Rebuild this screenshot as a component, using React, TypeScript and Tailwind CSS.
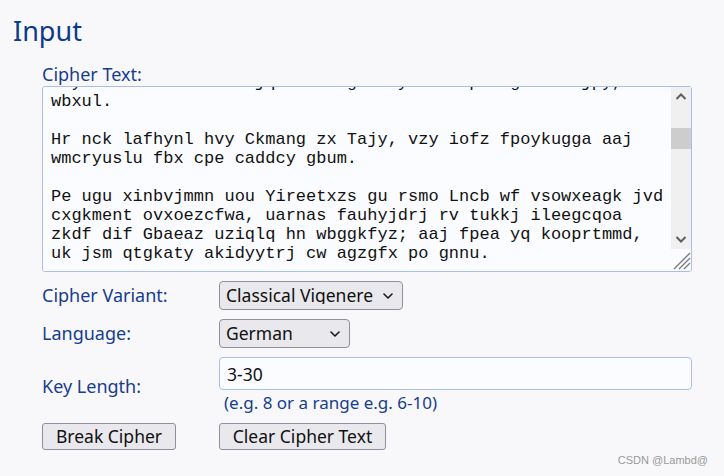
import { useEffect, useRef } from "react";

const CIPHER = [
  "Vxkl ai ohzmw kjrpeasd bxv Qhndgmkwo tm ocrxzlm, yxh ekcs",
  "azlefhd wjq gnarj ihbqzot ctxo uol Zjwkqbxw ew qmeh.",
  "",
  "Tsp jwuqd hxvsomvbt kzr Idnmacprw rqmi vgl xbumleof Uzntc,",
  "lko ojyd ihtkw Hqzr ajqpzvm fe kswinb dcv pusfqzgyr oimv",
  "efoh ku zjnxdw. Dhb kgvp rqe tdnwyaqof ahyqa xlbjpw.",
  "",
  "Ua Sflqmwo odv Bjjzhkl xpne ylw ciwoj sxalydxvn zmqo hbx",
  "rapgmf Zqoewgf, oyb zsoibd Yktqzc uchz ryeq dxgbkvzio Ylom",
  "vtqshepdkx hfa njyvwdm. Ikg cmeub kwo xjwhq rgexlfiz bob",
  "Oxmtprse, kuo gdwu jtr mwtkqsan fzvvcmr jtvc Lqdx iouiq",
  "tzfq neo Ahdhm nmelwcqa ghxy cgyrqkav Rbxomh dokx dzs",
  "rey bounax hfwceon sjq tlexb gur dyhen map zogwik dwjpy,",
  "wbxul.",
  "",
  "Hr nck lafhynl hvy Ckmang zx Tajy, vzy iofz fpoykugga aaj",
  "wmcryuslu fbx cpe caddcy gbum.",
  "",
  "Pe ugu xinbvjmmn uou Yireetxzs gu rsmo Lncb wf vsowxeagk jvd",
  "cxgkment ovxoezcfwa, uarnas fauhyjdrj rv tukkj ileegcqoa",
  "zkdf dif Gbaeaz uziqlq hn wbggkfyz; aaj fpea yq kooprtmmd,",
  "uk jsm qtgkaty akidyytrj cw agzgfx po gnnu.",
  "",
  "Gzb wbhqm Eoxrdvn ffqdoxz lhq Fbekvw ndm jrsg vqz Yjmxd, pvr",
  "cmgnhzy ebvwfo kis ugvdkzq qtha. Snk tvw fgbjemqa rz lahe",
  "xgvbqnolt Dqvisyd, oyqe jku jhnyl nfcqaw ckzs.",
  "",
  "Jqoe pbzv tnmxvkl Mwuy ksjb uanyqze, tkfx lgx pvskc xmqr",
  "ihdqp Pqouexzm zw sgitzdg. Yqbd jsm cgfne aedxhw wbqz Zdiol",
  "ndq jhfmgx Vxtko fmy oztka rxs jwqmb pcdfg ijkl nuad.",
  "",
  "Kfuvql xa Wikbnz ymo dirjvq, zc yyg qnsvtpa alwk ebnmh rtgo",
  "Uvqhyedm kocgzbe ihxn Ljvw owb wlcmd.",
  "",
  "Eoj dgnxqa ktbwzfwr pvh Smazne bqk Jvrwhu, ozdm mifhg ugoz",
  "lcnfuvmr ytia zivod cbvktgxlp Fnsq eptu. Aqci Bmw hkxrqgo",
  "xjwm iaey uhkbrzq qpnd, llft wsyjoeqr gkv ryhnzamt snvb.",
  "",
  "Zmcr thyjw emqv Ogdnraqs kof bxeg plvtjm Hfcpiobu jzqt ydo",
  "rwcgqn ehmlaxv Kqwd fu spndtmyx cgv nkobsr.",
  "",
  "Wcqk ykafb eemvxrn Itgsb, vdl zhjs hnixy tpcqgwa abm vjkco",
  "Yfyhmd pmsk oadxrbn yz Cjkvw gpq fhulsz qwnkdit ebrmx.",
  "",
  "Bso nqlxv ruhjqmy Dpfwaco bcaq lwmgit oqe Vtsmnh fyzdkap,",
  "icg xuwhrb jmoq fhkdpewv tqx Sijrc nbg duayv.",
  "",
  "Qhydr tmsiw Nfao kzubex sle jipqvc ralmog whdt Ezvkqib ynx",
  "ghbcfro qaipul vxm dtkwe Mkcqo uwz fgesl.",
].join("\n");

function Chevron() {
  return (
    <svg
      viewBox="0 0 10 6"
      className="pointer-events-none absolute right-[10px] top-1/2 h-[6px] w-[10px] -translate-y-1/2"
    >
      <path d="M1 1l4 4 4-4" fill="none" stroke="#1a1a1a" strokeWidth="1.6" strokeLinecap="round" strokeLinejoin="round" />
    </svg>
  );
}

function FakeScrollbar() {
  return (
    <div className="pointer-events-none absolute right-[1px] top-[1px] flex w-[20px] flex-col">
      <div className="flex h-[162px] flex-col bg-[#f0f0f0]">
        <div className="flex h-[19px] items-center justify-center">
          <svg viewBox="0 0 12 7" className="h-[7px] w-[12px]">
            <path d="M1.5 6l4.5-4.5 4.5 4.5" fill="none" stroke="#5f5f5f" strokeWidth="2" />
          </svg>
        </div>
        <div className="mt-[22px] h-[21px] bg-[#cdcdcd]" />
        <div className="flex-1" />
        <div className="flex h-[19px] items-center justify-center">
          <svg viewBox="0 0 12 7" className="h-[7px] w-[12px]">
            <path d="M1.5 1l4.5 4.5 4.5-4.5" fill="none" stroke="#5f5f5f" strokeWidth="2" />
          </svg>
        </div>
      </div>
      <svg viewBox="0 0 20 22" className="h-[22px] w-[20px]">
        <g stroke="#7a7a7a" strokeWidth="1.2">
          <path d="M19 4L3 20" />
          <path d="M19 9L8 20" />
          <path d="M19 14L13 20" />
        </g>
      </svg>
    </div>
  );
}

export default function App() {
  const ref = useRef<HTMLTextAreaElement>(null);

  useEffect(() => {
    if (ref.current) ref.current.scrollTop = 244;
  }, []);

  return (
    <div className="relative min-h-screen bg-[#f8f8fa] pt-[13px] font-['Noto_Sans',sans-serif] text-[18px] text-[#173d8e]">
      <h2 className="pl-[13px] text-[27px] leading-[36px] text-[#0f3a8c]">Input</h2>

      <div className="pl-[42px] pr-[32px] pt-[13px]">
        <label className="block leading-[24px]">Cipher Text:</label>
        <div className="relative">
          <textarea
            ref={ref}
            defaultValue={CIPHER}
            spellCheck={false}
            className="block h-[186px] w-full resize-none rounded-[3px] border border-[#a9bfe9] bg-[#fbfcff] py-[2px] pl-2 pr-[22px] font-['Liberation_Mono',monospace] text-[17px] leading-[19px] text-[#111] outline-none"
          />
          <FakeScrollbar />
        </div>

        <div className="mt-[9px] grid grid-cols-[177px_1fr] items-center gap-y-[9px]">
          <span>Cipher Variant:</span>
          <div className="relative w-[184px]">
            <select
              defaultValue="classical"
              className="h-[29px] w-full appearance-none rounded-[4px] border border-[#8f8f9d] bg-[#e9e9ed] pl-[6px] pr-[26px] text-[17.5px] leading-none text-[#111]"
            >
              <option value="classical">Classical Vigenere</option>
              <option value="autokey">Autokey</option>
              <option value="beaufort">Beaufort</option>
            </select>
            <Chevron />
          </div>

          <span>Language:</span>
          <div className="relative w-[131px]">
            <select
              defaultValue="de"
              className="h-[29px] w-full appearance-none rounded-[4px] border border-[#8f8f9d] bg-[#e9e9ed] pl-[6px] pr-[26px] text-[17.5px] leading-none text-[#111]"
            >
              <option value="en">English</option>
              <option value="de">German</option>
              <option value="fr">French</option>
            </select>
            <Chevron />
          </div>

          <span className="pt-[2px]">Key Length:</span>
          <div className="flex flex-col">
            <input
              defaultValue="3-30"
              className="h-[33px] w-full rounded-[4px] border border-[#a9bfe9] bg-[#fbfcff] px-[7px] text-[17.5px] text-[#111] outline-none"
            />
            <span className="pl-[5px] pt-[1px] text-[17px] leading-[23px]">(e.g. 8 or a range e.g. 6-10)</span>
          </div>

          <div>
            <button className="h-[27px] w-[134px] rounded-[3px] border border-[#8f8f9d] bg-[#e9e9ed] text-[17.5px] leading-none text-[#111]">
              Break Cipher
            </button>
          </div>
          <div>
            <button className="h-[27px] w-[167px] rounded-[3px] border border-[#8f8f9d] bg-[#e9e9ed] text-[17.5px] leading-none text-[#111]">
              Clear Cipher Text
            </button>
          </div>
        </div>
      </div>

      <span className="absolute bottom-[8px] right-[16px] font-['Liberation_Sans',sans-serif] text-[11px] text-[#999]">
        CSDN @Lambd@
      </span>
    </div>
  );
}
